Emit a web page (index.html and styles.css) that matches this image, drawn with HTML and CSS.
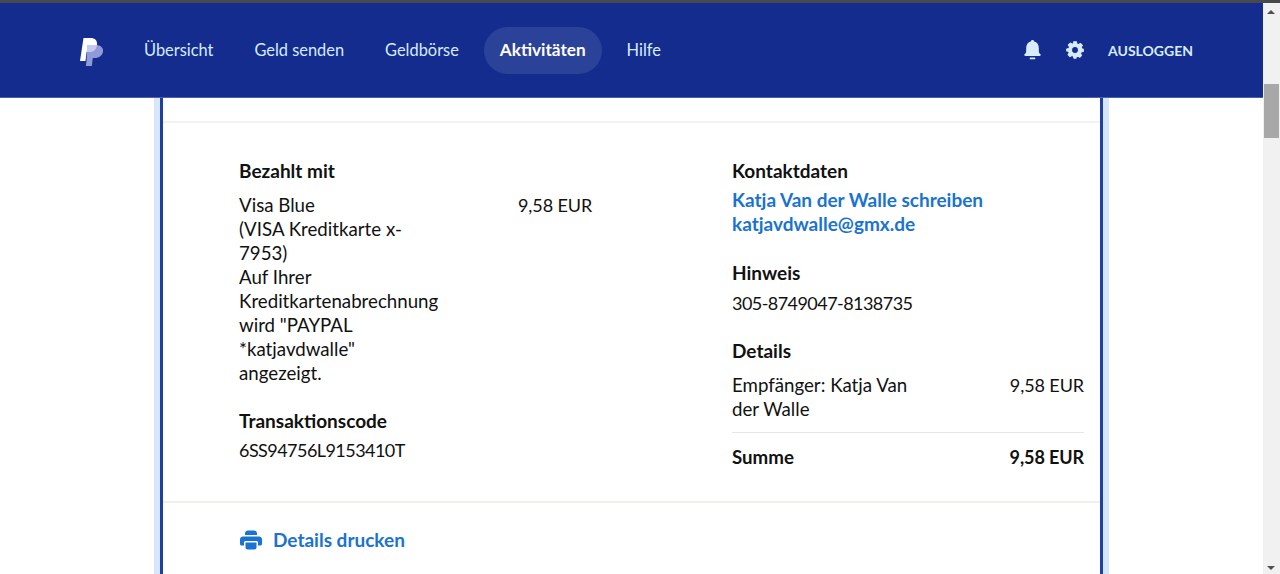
FILE: index.html
```html
<!DOCTYPE html>
<html lang="de">
<head>
    <meta charset="UTF-8">
    <title>PayPal Aktivitäten</title>
    <link rel="stylesheet" href="styles.css">
</head>
<body>
    <div class="top-line"></div>
    <div class="window">
        <div class="page">
            <!-- Navigation -->
            <header class="nav">
                <svg class="logo" width="24" height="28" viewBox="0 0 24 28">
                    <path fill="#ffffff" d="M3.500 0H10.500C15 0 17.500 2.500 17 7C16.500 11.500 13.500 14 10 14H6.600L5.500 23H0z"/>
                    <path fill="#8f9bd8" d="M7.500 7H17C21 7.500 23.500 10 23 13.500C22.500 17.500 19 20 15 20H12.800L11.800 28H5.800L6.500 23z"/>
                    <path fill="#c3cbee" d="M7.500 7H17C16.500 11.500 13.500 14 10 14H6.600z"/>
                </svg>
                <nav class="nav-links">
                    <a class="nav-link">Übersicht</a>
                    <a class="nav-link">Geld senden</a>
                    <a class="nav-link">Geldbörse</a>
                    <a class="nav-link active">Aktivitäten</a>
                    <a class="nav-link">Hilfe</a>
                </nav>
                <div class="nav-right">
                    <svg class="nav-icon" width="17" height="21" viewBox="0 0 18 22">
                        <path fill="#d7ebfb" d="M9 0c1 0 1.700.7 1.800 1.600C14 2.400 15.700 5 15.700 8.300v3.500c0 1.500.8 2.500 1.700 3.300.7.700.3 1.700-.7 1.700H1.300c-1 0-1.400-1-.7-1.700.9-.8 1.700-1.800 1.700-3.300V8.300C2.300 5 4 2.400 7.200 1.600 7.300.7 8 0 9 0z"/>
                        <rect fill="#d7ebfb" x="6" y="18.500" width="6" height="1.800" rx=".9"/>
                    </svg>
                    <svg class="nav-icon gear" width="18" height="18" viewBox="-1 -1 26 26">
                        <path fill="#d7ebfb" stroke="#d7ebfb" stroke-width="1.500" stroke-linejoin="round" fill-rule="evenodd" d="M10 0h4l.8 3.300 2.200.9L19.800 2.500l2.800 2.800-1.700 2.800.9 2.100L24 11v3l-3.200.8-.9 2.200 1.700 2.800-2.800 2.800-2.800-1.700-2.200.9L13.500 24h-3l-.8-3.200-2.200-.9-2.800 1.700-2.800-2.800 1.700-2.800-.9-2.200L0 13.500v-3l3.200-.8.9-2.200L2.400 4.700l2.800-2.800L8 3.600l2.100-.9zM12 7a5 5 0 1 0 0 10 5 5 0 0 0 0-10z"/>
                    </svg>
                    <a class="logout">AUSLOGGEN</a>
                </div>
            </header>

            <!-- Transaktion -->
            <div class="content">
                <div class="card">
                    <div class="card-top"></div>
                    <div class="card-body">
                        <div class="col-left">
                            <h3 class="label">Bezahlt mit</h3>
                            <div class="pay-row">
                                <p class="pay-text">Visa Blue<br>(VISA Kreditkarte x-7953)<br>Auf Ihrer Kreditkartenabrechnung wird "PAYPAL *katjavdwalle" angezeigt.</p>
                                <span class="pay-amount">9,58 EUR</span>
                            </div>
                            <h3 class="label code-label">Transaktionscode</h3>
                            <p class="value">6SS94756L9153410T</p>
                        </div>
                        <div class="col-right">
                            <h3 class="label">Kontaktdaten</h3>
                            <a class="link first-link">Katja Van der Walle schreiben</a>
                            <a class="link">katjavdwalle@gmx.de</a>
                            <h3 class="label hint-label">Hinweis</h3>
                            <p class="value hint-value">305-8749047-8138735</p>
                            <h3 class="label details-label">Details</h3>
                            <div class="detail-row">
                                <span class="detail-name">Empfänger: Katja Van der Walle</span>
                                <span class="amount">9,58 EUR</span>
                            </div>
                            <div class="sum-row">
                                <span>Summe</span>
                                <span class="amount">9,58 EUR</span>
                            </div>
                        </div>
                    </div>
                    <div class="card-footer">
                        <svg width="22" height="20" viewBox="0 0 22 20">
                            <path fill="#1a73d2" d="M5 3.500C5 1.500 6.300.5 8 .5h6c1.700 0 3 1 3 3V5H5zM3 6.500h16c1.700 0 3 1.300 3 3V14c0 .8-.7 1.500-1.500 1.500H18V12.500c0-.8-.7-1.500-1.500-1.500h-11c-.8 0-1.500.7-1.500 1.500v3H1.500C.7 15.500 0 14.800 0 14V9.500c0-1.700 1.300-3 3-3z"/>
                            <path fill="#1a73d2" d="M5.500 12.500h11v5c0 1.100-.9 2-2 2h-7c-1.100 0-2-.9-2-2z"/>
                        </svg>
                        <a class="link print-link">Details drucken</a>
                    </div>
                </div>
            </div>
        </div>

        <!-- Scrollbar -->
        <div class="scrollbar">
            <div class="arrow-up"></div>
            <div class="thumb"></div>
            <div class="arrow-down"></div>
        </div>
    </div>
</body>
</html>
```

FILE: styles.css
```css
html, body { height: 100%; }
body { margin: 0; overflow: hidden; background: #fff; color: #111; font-family: "Lato", "Open Sans", sans-serif; font-size: 18.7px; line-height: 24px; }
h3, p { margin: 0; font-size: inherit; }
a { display: block; }

.top-line { height: 3px; background: #48494d; }
.window { display: flex; height: 571px; }
.page { flex: 1; min-width: 0; overflow: hidden; }

.nav { height: 95px; background: #142c8e; border-bottom: 1px solid #4a62ad; box-sizing: border-box; display: flex; align-items: center; padding: 0 70px 0 80px; color: #d7ebfb; }
.logo { margin-top: 3px; }
.nav-links { display: flex; align-items: center; margin-left: 24px; }
.nav-link { padding: 0 16px 2px; margin-right: 9px; line-height: 45px; border-radius: 24px; font-size: 16.400px; }
.nav-link.active { background: #2b4299; color: #fff; font-weight: 700; font-size: 17.200px; }
.nav-right { margin-left: auto; display: flex; align-items: center; }
.gear { margin-left: 25px; }
.logout { margin-left: 24px; margin-top: 2px; font-weight: 700; font-size: 14px; }

.content { padding: 0 154px; }
.card { border-left: 3px solid #1e40a6; border-right: 3px solid #1e40a6; box-shadow: -6px 0 0 #d8e6fb, 6px 0 0 #d8e6fb; margin: 0 6px; height: 476px; }
.card-top { height: 23px; border-bottom: 2px solid #f2f2f0; }
.card-body { display: flex; height: 380px; border-bottom: 2px solid #f1f0e8; padding: 36px 16px 0 76px; box-sizing: border-box; }
.col-left { width: 493px; }
.col-right { flex: 1; }
.label { font-weight: 700; font-size: 19px; }
.pay-row { display: flex; margin-top: 10px; }
.pay-text { width: 202px; }
.pay-amount { margin-left: 77px; font-size: 18px; letter-spacing: -.1px; }
.code-label { margin-top: 24px; }
.value { margin-top: 5px; font-size: 18px; letter-spacing: -.55px; }
.hint-value { margin-top: 6px; }
.link { color: #1a73d2; font-weight: 700; font-size: 19px; }
.first-link { margin-top: 5px; }
.hint-label { margin-top: 25px; }
.details-label { margin-top: 24px; }
.detail-row { display: flex; justify-content: space-between; margin-top: 10px; padding-bottom: 11px; border-bottom: 1px solid #e6e6e6; }
.detail-name { width: 190px; }
.amount { font-size: 18px; letter-spacing: -.1px; }
.sum-row { display: flex; justify-content: space-between; margin-top: 12px; font-weight: 700; }
.card-footer { display: flex; align-items: center; padding: 25px 0 0 77px; }
.print-link { margin-left: 11px; }

.scrollbar { width: 17px; background: #f1f1f1; position: relative; }
.thumb { position: absolute; top: 81px; left: 1px; width: 15px; height: 54px; background: #a8a8a8; }
.arrow-up { position: absolute; top: 7px; left: 4px; border: 4px solid transparent; border-top: 0; border-bottom: 4px solid #505050; }
.arrow-down { position: absolute; bottom: 4px; left: 4px; border: 4px solid transparent; border-bottom: 0; border-top: 4px solid #505050; }
```
